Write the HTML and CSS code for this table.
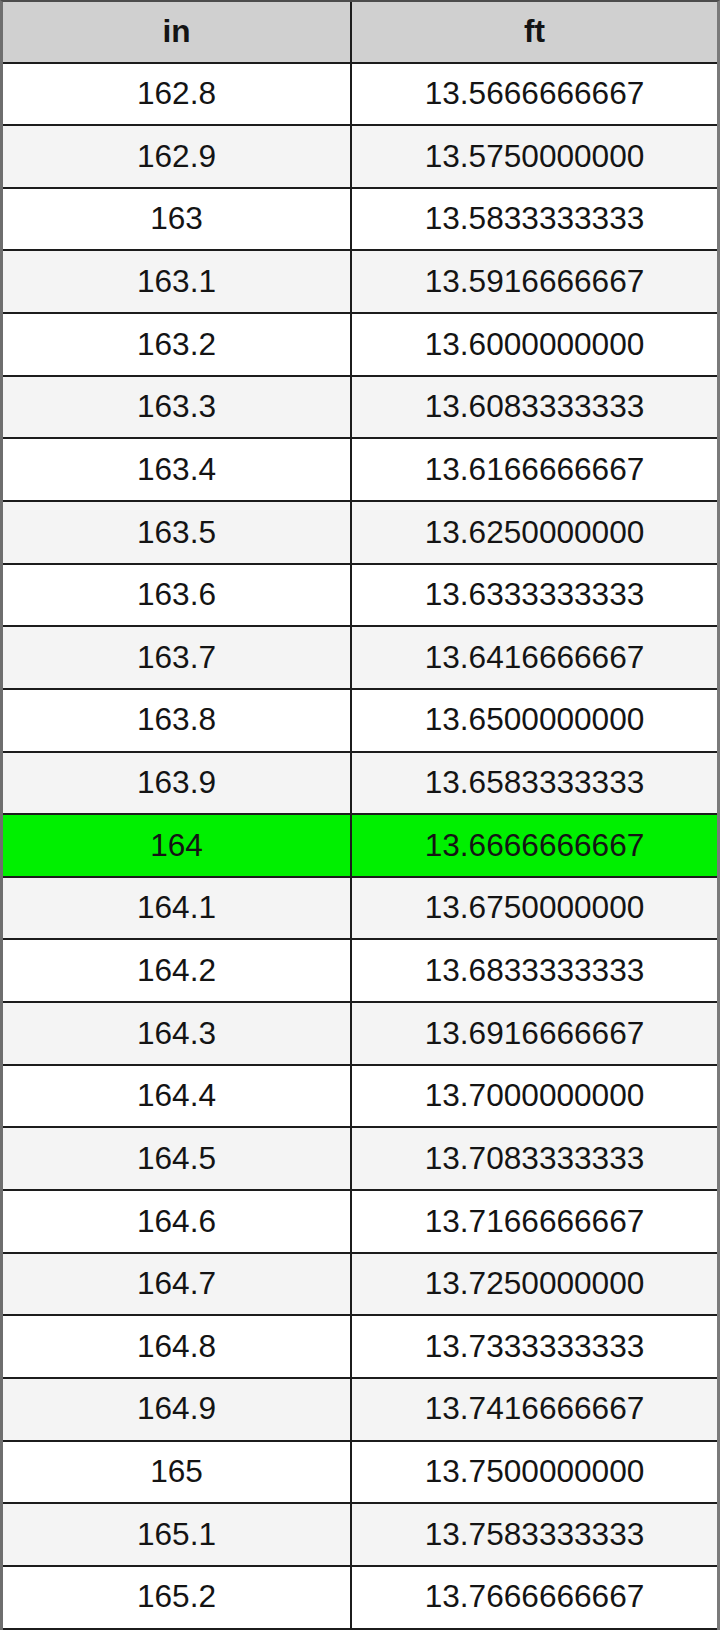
FILE: index.html
```html
<!DOCTYPE html>
<html>
<head>
<meta charset="utf-8">
<link rel="stylesheet" href="styles.css">
</head>
<body>
<table class="conv">
<thead>
<tr><th class="c1">in</th><th class="c2">ft</th></tr>
</thead>
<tbody>
<tr><td class="c1">162.8</td><td class="c2">13.5666666667</td></tr>
<tr><td class="c1">162.9</td><td class="c2">13.5750000000</td></tr>
<tr><td class="c1">163</td><td class="c2">13.5833333333</td></tr>
<tr><td class="c1">163.1</td><td class="c2">13.5916666667</td></tr>
<tr><td class="c1">163.2</td><td class="c2">13.6000000000</td></tr>
<tr><td class="c1">163.3</td><td class="c2">13.6083333333</td></tr>
<tr><td class="c1">163.4</td><td class="c2">13.6166666667</td></tr>
<tr><td class="c1">163.5</td><td class="c2">13.6250000000</td></tr>
<tr><td class="c1">163.6</td><td class="c2">13.6333333333</td></tr>
<tr><td class="c1">163.7</td><td class="c2">13.6416666667</td></tr>
<tr><td class="c1">163.8</td><td class="c2">13.6500000000</td></tr>
<tr><td class="c1">163.9</td><td class="c2">13.6583333333</td></tr>
<tr class="hl"><td class="c1">164</td><td class="c2">13.6666666667</td></tr>
<tr><td class="c1">164.1</td><td class="c2">13.6750000000</td></tr>
<tr><td class="c1">164.2</td><td class="c2">13.6833333333</td></tr>
<tr><td class="c1">164.3</td><td class="c2">13.6916666667</td></tr>
<tr><td class="c1">164.4</td><td class="c2">13.7000000000</td></tr>
<tr><td class="c1">164.5</td><td class="c2">13.7083333333</td></tr>
<tr><td class="c1">164.6</td><td class="c2">13.7166666667</td></tr>
<tr><td class="c1">164.7</td><td class="c2">13.7250000000</td></tr>
<tr><td class="c1">164.8</td><td class="c2">13.7333333333</td></tr>
<tr><td class="c1">164.9</td><td class="c2">13.7416666667</td></tr>
<tr><td class="c1">165</td><td class="c2">13.7500000000</td></tr>
<tr><td class="c1">165.1</td><td class="c2">13.7583333333</td></tr>
<tr><td class="c1">165.2</td><td class="c2">13.7666666667</td></tr>
</tbody>
</table>
</body>
</html>
```

FILE: styles.css
```css
html, body {
  margin: 0;
  padding: 0;
  background: #ffffff;
}

.conv {
  width: 720px;
  border-collapse: separate;
  border-spacing: 0;
  border-top: 2px solid #4c4c4c;
  border-left: 3px solid #6e6e6e;
  border-right: 3px solid #7a7a7a;
  font-family: "Liberation Sans", Arial, sans-serif;
  font-size: 31.6px;
  color: #141414;
  table-layout: fixed;
}

.conv th,
.conv td {
  box-sizing: border-box;
  padding: 0;
  text-align: center;
  vertical-align: middle;
  border-bottom: 2px solid #1c1c1c;
  height: 62.65px;
  line-height: 1;
}

.conv th {
  height: 61.5px;
  font-weight: bold;
  background: #d0d0d0;
  border-bottom-width: 2.5px;
}

.conv .c1 {
  width: 349px;
  border-right: 2px solid #1c1c1c;
}

.conv .c2 {
  width: auto;
}

.conv tbody tr:nth-child(odd) td {
  background: #ffffff;
}

.conv tbody tr:nth-child(even) td {
  background: #f4f4f4;
}

.conv tbody tr.hl td {
  background: #00f000;
}
```
